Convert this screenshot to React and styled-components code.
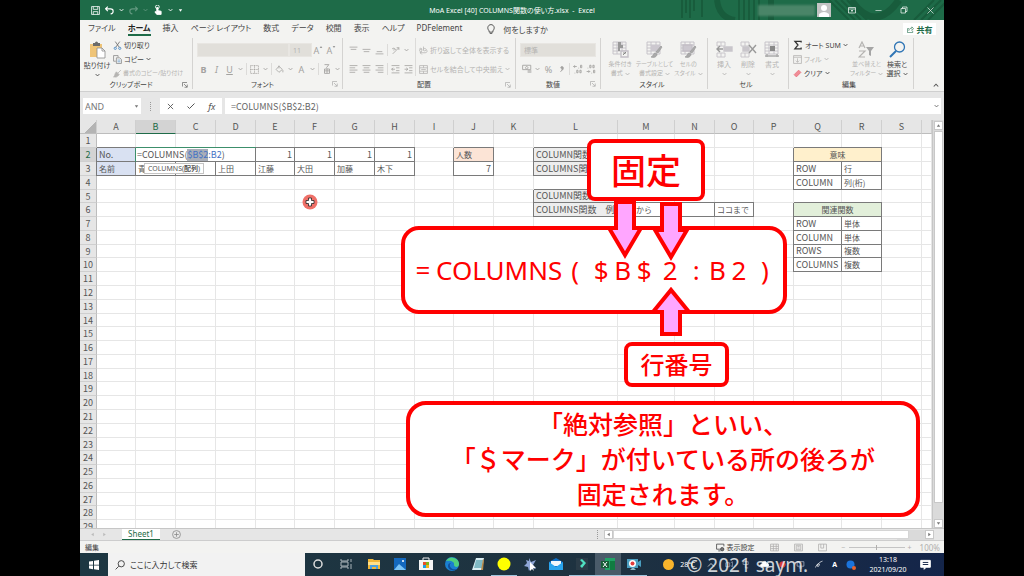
import React from "react";
import styled, { createGlobalStyle, css } from "styled-components";

const GlobalStyle = createGlobalStyle`
  * {
    box-sizing: border-box;
  }
  body {
    margin: 0;
    background: #000;
  }
  button,
  input,
  select {
    font: inherit;
    color: inherit;
    border: 0;
    margin: 0;
    padding: 0;
    background: none;
  }
  svg {
    display: block;
    flex: none;
  }
`;

const Stage = styled.div`
  padding: 0 80px;
  font-family: "Noto Sans", "Noto Sans CJK JP", sans-serif;
`;

const Window = styled.main`
  position: relative;
  display: flex;
  flex-direction: column;
  height: 100vh;
  overflow: hidden;
  background: #e6e6e6;
  color: #444;
  font-size: 7px;
  line-height: 9px;
  font-feature-settings: "palt";
  white-space: nowrap;
`;

/* ---------- title bar ---------- */

const TitleBar = styled.header`
  position: relative;
  display: grid;
  grid-template-columns: 1fr auto 1fr;
  align-items: center;
  flex: none;
  height: 20px;
  background: #1e6b48;
  color: #fff;
`;

const TitlePattern = styled.svg`
  position: absolute;
  right: 0;
  top: 0;
`;

const QuickAccess = styled.div`
  display: flex;
  align-items: center;
  gap: 5px;
  padding-left: 11px;
`;

const WindowControls = styled.div`
  position: relative;
  display: flex;
  align-items: center;
  justify-content: flex-end;
  padding-right: 1px;
`;

const AccountName = styled.div`
  width: 57px;
  height: 11px;
  margin-right: 2px;
  background: #4a8568;
  filter: blur(1px);
`;

const Avatar = styled.div`
  width: 14px;
  height: 14px;
  margin-right: 8px;
  background: #c4c4c4;
`;

const ControlButton = styled.button`
  display: flex;
  align-items: center;
  justify-content: center;
  width: 26px;
  height: 20px;
`;

const IconButton = styled.button`
  display: flex;
  align-items: center;
  opacity: ${(p) => (p.$dim ? 0.3 : 1)};
`;

/* ---------- ribbon ---------- */

const RibbonTabs = styled.nav`
  display: flex;
  align-items: center;
  flex: none;
  gap: 12px;
  height: 18px;
  padding: 0 8px;
  background: #f3f3f1;
  font-size: 8px;
`;

const RibbonTab = styled.button`
  height: 14px;
  line-height: 12px;
  border-bottom: 2px solid transparent;
  ${(p) =>
    p.$active &&
    css`
      color: #222;
      font-weight: 700;
      border-color: #1e6b48;
    `}
`;

const TellMe = styled.button`
  display: flex;
  align-items: center;
  gap: 7px;
  margin-left: 12px;
`;

const ShareButton = styled.button`
  display: flex;
  align-items: center;
  justify-content: center;
  gap: 3px;
  width: 33px;
  height: 12px;
  margin-left: auto;
  background: #fff;
  color: #1e6b48;
  font-weight: 700;
`;

const RibbonBody = styled.section`
  display: flex;
  flex: none;
  height: 54px;
  padding-bottom: 2px;
  background: #f3f3f1;
  border-bottom: 1px solid #cfcfcf;
`;

const Group = styled.section`
  display: flex;
  flex-direction: column;
  width: ${(p) => p.$width}px;
  border-right: 1px solid #d4d3d1;
`;

const GroupBody = styled.div`
  display: flex;
  flex: 1;
  gap: ${(p) => p.$gap || 0}px;
  padding: 0 4px;
`;

const GroupLabel = styled.footer`
  display: flex;
  align-items: center;
  height: 10px;
  padding-right: 4px;
  span {
    flex: 1;
    text-align: center;
  }
`;

const Lines = styled.div`
  display: flex;
  flex-direction: column;
  justify-content: center;
`;

const Rows = styled.div`
  display: flex;
  flex-direction: column;
  gap: 5px;
  padding-top: 5px;
`;

const Row = styled.div`
  display: flex;
  align-items: center;
  height: 14px;
`;

const AlignTools = styled(Rows)`
  width: 69px;
  margin-bottom: 4px;
  border-right: 1px solid #dcdbd9;
`;

const Tool = styled.button`
  display: flex;
  align-items: center;
  justify-content: center;
  width: ${(p) => (p.$caret ? 9 : 13)}px;
  height: 14px;
  color: #a3a2a0;
  font-size: 9px;
  font-weight: ${(p) => (p.$bold ? 700 : 400)};
  font-style: ${(p) => (p.$italic ? "italic" : "normal")};
  text-decoration: ${(p) => (p.$underline ? "underline" : "none")};
`;

const SizeMark = styled.span`
  align-self: flex-start;
  padding-top: 2px;
`;

const Divider = styled.i`
  width: 1px;
  height: 12px;
  margin: 0 1px;
  background: #dcdbd9;
`;

const LineButton = styled.button`
  display: flex;
  align-items: center;
  gap: ${(p) => (p.$small ? 1 : 2)}px;
  height: 14px;
  color: ${(p) => (p.$on ? "#444" : "#b5b4b2")};
  font-size: ${(p) => (p.$small ? 6 : 7)}px;
`;

const BigButton = styled.button`
  display: flex;
  flex-direction: column;
  align-items: center;
  gap: 2px;
  width: ${(p) => p.$width}px;
  padding-top: 3px;
  color: ${(p) => (p.$on ? "#444" : "#b5b4b2")};
  font-size: ${(p) => (p.$small ? 6 : 7)}px;
  span {
    display: flex;
    flex-direction: column;
    align-items: center;
  }
  b {
    display: flex;
    align-items: center;
    gap: 2px;
    height: 9px;
    font-weight: 400;
  }
`;

const Combo = styled.select`
  appearance: none;
  width: ${(p) => p.$width}px;
  height: 14px;
  padding: 0 3px;
  border: 1px solid #e8e6e2;
  background: #e1dfda;
  color: #b5b4b2;
`;

const CollapseButton = styled.button`
  align-self: flex-end;
  margin: 0 5px 1px auto;
`;

/* ---------- formula bar ---------- */

const FormulaBar = styled.section`
  display: flex;
  align-items: center;
  flex: none;
  gap: 3px;
  height: 28px;
  padding: 0 3px;
  font-size: 9px;
`;

const NameBox = styled.label`
  display: flex;
  align-items: center;
  width: 58px;
  height: 16px;
  padding: 0 2px;
  background: #fff;
  color: #777;
  input {
    flex: 1;
    min-width: 0;
  }
`;

const Dots = styled.i`
  width: 1px;
  height: 9px;
  margin: 0 6px 0 6px;
  border-left: 1px dotted #999;
`;

const FormulaActions = styled.div`
  display: flex;
  align-items: center;
  justify-content: space-around;
  width: 62px;
  height: 16px;
  background: #fff;
  color: #555;
`;

const FormulaInput = styled.label`
  display: flex;
  align-items: center;
  flex: 1;
  height: 16px;
  padding: 0 2px 0 6px;
  background: #fff;
  color: #666;
  font-family: "Noto Sans CJK JP", sans-serif;
  input {
    flex: 1;
  }
`;

/* ---------- sheet ---------- */

const SheetArea = styled.section`
  display: flex;
  flex: 1;
  min-height: 0;
`;

const SheetView = styled.div`
  flex: 1;
  min-width: 0;
  overflow: hidden;
  border-right: 1px solid #c6c6c6;
`;

const Grid = styled.table`
  table-layout: fixed;
  width: 100%;
  border-spacing: 0;
  background: #fff;
  font-family: "Noto Sans CJK JP", sans-serif;
  font-size: 9px;
  line-height: 12px;
  font-feature-settings: normal;
  tr {
    height: 14px;
  }
  tbody tr:nth-child(9n + 5),
  tbody tr:nth-child(9n) {
    height: 13px;
  }
`;

const HeadCell = styled.th`
  height: 13px;
  padding: 0;
  background: ${(p) => (p.$selected ? "#d3d3d3" : "#e6e6e6")};
  border-right: 1px solid ${(p) => (p.$row ? "#bdbdbd" : "#cfcfcf")};
  border-bottom: 1px solid
    ${(p) => (p.$row ? "#cfcfcf" : p.$selected ? "#1e6b48" : "#bdbdbd")};
  color: ${(p) => (p.$selected ? "#1e6b48" : "#555")};
  font-weight: 400;
  line-height: 11px;
`;

const Corner = styled(HeadCell)`
  background: linear-gradient(135deg, #e6e6e6 60%, #b4b4b4 60%);
`;

const Cell = styled.td`
  position: ${(p) => (p.$edit ? "relative" : "static")};
  height: 13px;
  padding: 0 2px;
  border-right: 1px solid #e6e6e6;
  border-bottom: 1px solid #e6e6e6;
  background: ${(p) => p.$fill || "transparent"};
  color: #555;
  font-size: ${(p) => (p.$kanji ? 8 : 9)}px;
  text-align: ${(p) => p.$align || "left"};
  ${(p) =>
    p.$boxed &&
    css`
      border-color: #7a7a7a;
      box-shadow: -1px 0 #7a7a7a, 0 -1px #7a7a7a;
    `}
  ${(p) =>
    p.$edit &&
    css`
      padding: 0 1px;
      box-shadow: -1px 0 #3c8f6b, 0 -1px #3c8f6b;
    `}
`;

const RefText = styled.span`
  color: #4472c4;
`;

const PickedRef = styled(RefText)`
  display: inline-block;
  background: #a9aeb8;
`;

const ArgHint = styled.div`
  position: absolute;
  left: 8px;
  top: 15px;
  height: 11px;
  padding: 0 3px;
  border: 1px solid #c4c4c4;
  background: #fff;
  color: #555;
  font-family: "Noto Sans", "Noto Sans CJK JP", sans-serif;
  font-size: 7px;
  line-height: 9px;
`;

const ScrollColumn = styled.div`
  display: flex;
  flex-direction: column;
  width: 11px;
  padding: 1px 1px 0;
  background: #dadada;
`;

const ScrollButton = styled.button`
  display: flex;
  align-items: center;
  justify-content: center;
  width: 9px;
  height: 9px;
  background: #fff;
  border: 1px solid #c8c8c8;
`;

const VerticalThumb = styled.div`
  flex: 1;
  margin: 1px 0 16px;
  background: #fff;
  border: 1px solid #c8c8c8;
`;

const SheetTabs = styled.section`
  display: flex;
  align-items: center;
  flex: none;
  height: 13px;
  padding: 0 10px;
  border-top: 1px solid #c6c6c6;
  border-bottom: 1px solid #cdcdcd;
  font-size: 8px;
`;

const TabArrows = styled.div`
  display: flex;
  gap: 7px;
  width: 32px;
`;

const SheetTab = styled.button`
  align-self: flex-start;
  width: 38px;
  height: 11px;
  margin-right: 12px;
  border-bottom: 1px solid #1e6b48;
  background: #fff;
  color: #1e6b48;
  line-height: 10px;
`;

const HorizontalScroll = styled.div`
  display: flex;
  align-items: center;
  width: 330px;
  height: 10px;
  background: linear-gradient(#dadada, #dadada) right / 37px 100% no-repeat;
`;

const ScrollGrip = styled(Dots)`
  margin: 0 6px 0 auto;
`;

const HorizontalThumb = styled.div`
  flex: 1;
  height: 9px;
  margin-right: 16px;
  background: #fff;
  border: 1px solid #d5d5d5;
`;

const StatusBar = styled.footer`
  display: flex;
  align-items: center;
  flex: none;
  height: 12px;
  padding: 0 4px 0 5px;
  background: #f3f3f1;
`;

const StatusRight = styled.div`
  display: flex;
  align-items: center;
  gap: 15px;
  margin-left: auto;
  color: #b0afad;
`;

const DisplaySettings = styled.button`
  display: flex;
  align-items: center;
  gap: 2px;
  color: #444;
`;

const ZoomControl = styled.label`
  display: flex;
  align-items: center;
  gap: 3px;
  input {
    appearance: none;
    width: 56px;
    height: 1px;
    background: #c4c4c4;
  }
  input::-webkit-slider-thumb {
    appearance: none;
    width: 1px;
    height: 5px;
    background: #b0afad;
  }
  output {
    margin-left: 5px;
    font-size: 8px;
  }
`;

/* ---------- taskbar ---------- */

const Taskbar = styled.footer`
  display: flex;
  flex: none;
  height: 23px;
  background: linear-gradient(90deg, #1d3742, #1e3240 60%, #14254a);
  color: #fff;
`;

const StartButton = styled.button`
  display: flex;
  align-items: center;
  justify-content: center;
  width: 28px;
`;

const SearchBox = styled.label`
  display: flex;
  align-items: center;
  gap: 5px;
  width: 197px;
  padding-left: 7px;
  background: #f2f2f2;
  color: #333;
  font-size: 8px;
  input {
    flex: 1;
    min-width: 0;
  }
  input::placeholder {
    color: #333;
  }
`;

const TaskButton = styled.button`
  display: flex;
  align-items: center;
  justify-content: center;
  width: ${(p) => (p.$wide ? 30 : 26)}px;
  border-bottom: 1px solid ${(p) => (p.$open ? "#9fc4dc" : "transparent")};
  background: ${(p) => (p.$front ? "#4a5b69" : "none")};
`;

const Tray = styled.div`
  display: flex;
  align-items: center;
  gap: 9px;
  margin-left: auto;
  padding-right: 13px;
  font-size: 7px;
`;

const Weather = styled.span`
  display: flex;
  align-items: center;
  gap: 6px;
  padding-right: 3px;
`;

const Clock = styled.time`
  width: 46px;
  text-align: center;
  line-height: 10px;
`;

/* ---------- captions over the sheet ---------- */

const Caption = styled.aside`
  position: absolute;
  left: ${(p) => p.$x}px;
  top: ${(p) => p.$y}px;
  display: flex;
  align-items: center;
  justify-content: center;
  width: ${(p) => p.$w}px;
  height: ${(p) => p.$h}px;
  border: 4px solid #f00;
  border-radius: ${(p) => p.$radius}px;
  background: #fff;
  color: #f00;
  font-feature-settings: normal;
  font-weight: ${(p) => p.$weight || 500};
  font-size: ${(p) => p.$size}px;
  line-height: 35px;
  text-align: center;
`;

const Wide = styled.span`
  width: 1em;
  text-align: center;
`;

const Arrow = styled.svg`
  position: absolute;
  left: ${(p) => p.$x}px;
  top: ${(p) => p.$y}px;
  fill: #ffa6ff;
  stroke: #f00;
  stroke-width: 4;
`;

const Pointer = styled.svg`
  position: absolute;
  left: 222px;
  top: 194px;
`;

const Watermark = styled.div`
  position: absolute;
  right: 136px;
  bottom: 0;
  color: rgba(255, 255, 255, 0.8);
  font-size: 19px;
  line-height: 21px;
`;

/* ---------- drawings ---------- */

const Icon = ({ size = 10, w, h, box = "0 0 16 16", color = "currentColor", children }) => (
  <svg
    width={w || size}
    height={h || size}
    viewBox={box}
    fill="none"
    stroke={color}
    strokeWidth="1.4"
    aria-hidden="true"
  >
    {children}
  </svg>
);

const Caret = ({ color }) => (
  <Icon w={5} h={4} box="0 0 8 6" color={color}>
    <path d="M1 1.5l3 3 3-3" />
  </Icon>
);

const Triangle = ({ turn = 0, size = 5, color = "#777" }) => (
  <svg width={size} height={size} viewBox="0 0 6 6" aria-hidden="true">
    <path d="M1 1.5h4L3 4.5z" fill={color} transform={`rotate(${turn} 3 3)`} />
  </svg>
);

const Launcher = ({ on }) => (
  <Icon size={6} color={on ? "#666" : "#aaa"} box="0 0 12 12">
    <path d="M1 9V1h9M4 4l6 6M10.500 5v5.500H5" />
  </Icon>
);

const AlignIcon = ({ lines }) => (
  <Icon size={9}>
    {lines.map(([y, a, b]) => (
      <path key={y} d={`M${a} ${y}H${b}`} />
    ))}
  </Icon>
);

const topLines = [[2, 1, 15], [6, 3, 13]];
const middleLines = [[6, 1, 15], [10, 3, 13]];
const bottomLines = [[10, 3, 13], [14, 1, 15]];
const leftLines = [[1, 1, 15], [5, 1, 11], [9, 1, 15], [13, 1, 11]];
const centerLines = [[1, 1, 15], [5, 3, 13], [9, 1, 15], [13, 3, 13]];
const rightLines = [[1, 1, 15], [5, 5, 15], [9, 1, 15], [13, 5, 15]];

const PasteIcon = () => (
  <svg width="17" height="18" viewBox="0 0 17 18" aria-hidden="true">
    <path d="M1 3h12v13H1z" fill="#efc477" />
    <path d="M4 2h2a1.500 1.500 0 0 1 3 0h2v3H4z" fill="#6b6b6b" />
    <path d="M8 7h5l3 3v7H8z" fill="#fff" stroke="#8a8a8a" strokeWidth="0.800" />
    <path d="M13 7v3h3" fill="none" stroke="#8a8a8a" strokeWidth="0.800" />
  </svg>
);

const CutIcon = () => (
  <Icon size={9} color="#666">
    <path d="M4 1l7 10M12 1L5 11" />
    <circle cx="4" cy="13" r="2" stroke="#3a7fc1" />
    <circle cx="12" cy="13" r="2" stroke="#3a7fc1" />
  </Icon>
);

const CopyIcon = () => (
  <Icon size={9} color="#888">
    <path d="M9 4V1H1v10h4M6 5h6l3 3v7H6z" />
    <path d="M8 9h5M8 12h5" stroke="#3a7fc1" strokeWidth="1" />
  </Icon>
);

const BrushIcon = () => (
  <Icon size={9}>
    <path d="M14 2L9 7M6 5l5 5-3 3c-2 2-5 1-7 1 2-1 2-4 3-6z" fill="currentColor" />
  </Icon>
);

const TableIcon = ({ children }) => (
  <Icon size={17} box="0 0 17 17" color="#c3bfc6">
    <path d="M1 1h13v12H1zM1 4h13M1 7h13M1 10h13M5 1v12M10 1v12" strokeWidth="0.900" />
    {children}
  </Icon>
);

const CellsIcon = ({ children }) => (
  <Icon size={17} box="0 0 17 17" color="#c9c6cb">
    <path d="M1 1h8v4H1zM5 1v4M1 12h8v4H1zM5 12v4" strokeWidth="1" />
    {children}
  </Icon>
);

const StyleBrush = () => (
  <path d="M16 6l-4 6-2-1 5-6zM9 12c-2 0-1 3-4 4 3 1 6 0 6-3z" fill="#aaa" stroke="#999" strokeWidth="0.700" />
);

const PatternLines = () => (
  <TitlePattern width="265" height="20" fill="none" stroke="#185c3c" aria-hidden="true">
    <path
      d="M3 0v18M7 0v13M11 0v18M15 0v11M23 0v17M60 0v20M65 0v20M70 0v20M75 0v20M80 0v20"
      strokeWidth="2"
    />
    <path d="M38 0q2 18 18 20M92 0v20" strokeWidth="6" />
    <path
      d="M150 0l20 20M156 0l20 20M162 0l20 20M168 0l20 20M235 20l20-20M242 20l20-20M249 20l20-20"
      strokeWidth="2"
    />
    <path d="M172 0q24 34 48 0" strokeWidth="7" />
  </TitlePattern>
);

/* ---------- sheet data ---------- */

const columns = [
  ["A", 39], ["B", 40], ["C", 40], ["D", 40], ["E", 39], ["F", 40], ["G", 40],
  ["H", 40], ["I", 39], ["J", 40], ["K", 40], ["L", 84], ["M", 57], ["N", 40],
  ["O", 39], ["P", 40], ["Q", 48], ["R", 40], ["S", 40], ["", null],
];

const blue = "#d9e1f2";
const grey = "#ededed";

const cells = {
  A2: { text: "No.", fill: blue },
  B2: { edit: true, span: 3 },
  E2: { text: "1", align: "right" },
  F2: { text: "1", align: "right" },
  G2: { text: "1", align: "right" },
  H2: { text: "1", align: "right" },
  A3: { text: "名前", fill: blue },
  B3: { text: "青" },
  C3: { text: "" },
  D3: { text: "上田" },
  E3: { text: "江藤" },
  F3: { text: "大田" },
  G3: { text: "加藤" },
  H3: { text: "木下" },
  J2: { text: "人数", fill: "#fce4d6" },
  J3: { text: "7", align: "right" },
  L2: { text: "COLUMN関数", fill: grey },
  L3: { text: "COLUMNS関数", fill: grey },
  L5: { text: "COLUMN関数", fill: grey },
  L6: { text: "COLUMNS関数　例", fill: grey },
  M6: { text: "ココから" },
  N6: { text: "" },
  O6: { text: "ココまで" },
  Q2: { text: "意味", fill: "#fff0cc", align: "center", span: 2 },
  Q3: { text: "ROW" },
  R3: { text: "行" },
  Q4: { text: "COLUMN" },
  R4: { text: "列(桁)" },
  Q6: { text: "関連関数", fill: "#e2efda", align: "center", span: 2 },
  Q7: { text: "ROW" },
  R7: { text: "単体" },
  Q8: { text: "COLUMN" },
  R8: { text: "単体" },
  Q9: { text: "ROWS" },
  R9: { text: "複数" },
  Q10: { text: "COLUMNS" },
  R10: { text: "複数" },
};

const SheetRow = ({ number }) => {
  const items = [];
  for (let i = 0; i < columns.length; i++) {
    const cell = cells[columns[i][0] + number];
    if (!cell) {
      items.push(<Cell key={i} />);
    } else if (cell.edit) {
      items.push(
        <Cell key={i} colSpan={cell.span} $boxed $edit>
          =COLUMNS(<PickedRef>$B$2</PickedRef>
          <RefText>:B2</RefText>)
          <ArgHint>
            COLUMNS(<b>配列</b>)
          </ArgHint>
        </Cell>
      );
    } else {
      items.push(
        <Cell
          key={i}
          colSpan={cell.span}
          $boxed
          $fill={cell.fill}
          $align={cell.align}
          $kanji={!/[A-Z0-9]/.test(cell.text)}
        >
          {cell.text}
        </Cell>
      );
    }
    if (cell && cell.span) i += cell.span - 1;
  }
  return (
    <tr>
      <HeadCell $row $selected={number === 2}>
        {number}
      </HeadCell>
      {items}
    </tr>
  );
};

const Sheet = () => (
  <SheetArea>
    <SheetView>
      <Grid>
        <colgroup>
          <col width="17" />
          {columns.map(([name, width]) => (
            <col key={name} width={width || undefined} />
          ))}
        </colgroup>
        <thead>
          <tr>
            <Corner />
            {columns.map(([name]) => (
              <HeadCell key={name} $selected={name === "B"}>
                {name}
              </HeadCell>
            ))}
          </tr>
        </thead>
        <tbody>
          {Array.from({ length: 29 }, (_, i) => (
            <SheetRow key={i} number={i + 1} />
          ))}
        </tbody>
      </Grid>
    </SheetView>
    <ScrollColumn>
      <ScrollButton aria-label="上へ">
        <Triangle turn={180} />
      </ScrollButton>
      <VerticalThumb />
      <ScrollButton aria-label="下へ">
        <Triangle />
      </ScrollButton>
    </ScrollColumn>
  </SheetArea>
);

/* ---------- ribbon groups ---------- */

const tabs = [
  "ファイル", "ホーム", "挿入", "ページ レイアウト", "数式",
  "データ", "校閲", "表示", "ヘルプ", "PDFelement",
];

const RibbonGroup = ({ label, width, gap, launcher, on, children }) => (
  <Group $width={width}>
    <GroupBody $gap={gap}>{children}</GroupBody>
    <GroupLabel>
      <span>{label}</span>
      {launcher && <Launcher on={on} />}
    </GroupLabel>
  </Group>
);

const CaretTool = () => (
  <Tool $caret aria-label="その他">
    <Caret />
  </Tool>
);

const Big = ({ icon, lines, width, on, small, caret }) => (
  <BigButton $width={width} $on={on} $small={small}>
    {icon}
    <span>
      {lines.map((line, i) => (
        <b key={line}>
          {line}
          {caret === "inline" && i === lines.length - 1 && <Caret />}
        </b>
      ))}
      {caret === "below" && (
        <b>
          <Caret />
        </b>
      )}
    </span>
  </BigButton>
);

const Ribbon = () => (
  <RibbonBody>
    <RibbonGroup label="クリップボード" width={113} gap={3} launcher on>
      <Big icon={<PasteIcon />} lines={["貼り付け"]} width={26} on caret="below" />
      <Lines>
        <LineButton $on><CutIcon />切り取り</LineButton>
        <LineButton $on><CopyIcon />コピー <Caret /></LineButton>
        <LineButton $small><BrushIcon />書式のコピー/貼り付け</LineButton>
      </Lines>
    </RibbonGroup>

    <RibbonGroup label="フォント" width={150} launcher>
      <Rows>
        <Row>
          <Combo $width={92} aria-label="フォント名" />
          <Combo $width={23} aria-label="サイズ" defaultValue="11">
            <option>11</option>
          </Combo>
          <Tool>A<SizeMark><Triangle turn={180} size={4} color="#999" /></SizeMark></Tool>
          <Tool>A<SizeMark><Triangle size={4} color="#999" /></SizeMark></Tool>
        </Row>
        <Row>
          <Tool $bold>B</Tool>
          <Tool $italic>I</Tool>
          <Tool $underline>U</Tool>
          <CaretTool />
          <Divider />
          <Tool aria-label="罫線">
            <Icon size={9}><path d="M1 1h14v14H1zM8 1v14M1 8h14" strokeDasharray="2 1" /></Icon>
          </Tool>
          <CaretTool />
          <Divider />
          <Tool aria-label="塗りつぶし">
            <Icon size={9}><path d="M7 2l6 6-6 5-5-5zM7 1v5M14 9v4" /></Icon>
          </Tool>
          <CaretTool />
          <Tool>A</Tool>
          <CaretTool />
          <Divider />
          <Tool aria-label="ふりがな">
            <Icon size={10}><path d="M4 1h7L7 6M4 8h8M8 7v8M4 11h8M4 15h8M4 8v7M12 8v7" /></Icon>
          </Tool>
          <CaretTool />
        </Row>
      </Rows>
    </RibbonGroup>

    <RibbonGroup label="配置" width={173} gap={3} launcher>
      <AlignTools>
        <Row>
          <Tool aria-label="上揃え"><AlignIcon lines={topLines} /></Tool>
          <Tool aria-label="上下中央揃え"><AlignIcon lines={middleLines} /></Tool>
          <Tool aria-label="下揃え"><AlignIcon lines={bottomLines} /></Tool>
          <Divider />
          <Tool aria-label="方向">
            <Icon size={9}><path d="M3 14L14 3M10 3h4v4M2 5a2 2 0 1 1 3 3M5 3l4 4" /></Icon>
          </Tool>
          <CaretTool />
        </Row>
        <Row>
          <Tool aria-label="左揃え"><AlignIcon lines={leftLines} /></Tool>
          <Tool aria-label="中央揃え"><AlignIcon lines={centerLines} /></Tool>
          <Tool aria-label="右揃え"><AlignIcon lines={rightLines} /></Tool>
          <Divider />
          <Tool aria-label="インデントを減らす">
            <Icon size={9}><path d="M1 1h14M9 5h6M9 10h6M1 14h14M7 7.500H1M4 5L1 7.500 4 10" /></Icon>
          </Tool>
          <Tool aria-label="インデントを増やす">
            <Icon size={9}><path d="M1 1h14M9 5h6M9 10h6M1 14h14M1 7.500h6M4 5l3 2.500L4 10" /></Icon>
          </Tool>
        </Row>
      </AlignTools>
      <Rows>
        <LineButton>
          <Icon size={9}><path d="M1 6a2 2 0 1 1 4 0v2a2 2 0 1 1-2-2h2M8 1v7a3 2 0 1 0 0-3M2 12h9c4 0 4-4 2-5M5 10l-3 2 3 3" /></Icon>
          折り返して全体を表示する
        </LineButton>
        <LineButton>
          <Icon size={9}><path d="M1 1h14v14H1zM1 5h14M1 11h14M8 1v4M8 11v4M4 8h8" /></Icon>
          セルを結合して中央揃え <Caret />
        </LineButton>
      </Rows>
    </RibbonGroup>

    <RibbonGroup label="数値" width={85} launcher>
      <Rows>
        <Row>
          <Combo $width={76} aria-label="表示形式" defaultValue="標準">
            <option>標準</option>
          </Combo>
        </Row>
        <Row>
          <Tool aria-label="通貨">
            <Icon size={10}><path d="M1 2h13v7H1zM7.500 4a2 2 0 1 0 .1 0M9 11h6M9 13h6" /></Icon>
          </Tool>
          <CaretTool />
          <Tool>%</Tool>
          <Tool aria-label="桁区切り">
            <Icon size={8}><path d="M9 10c2-1 3-7-1-7-4 0-3 5 0 4 0 3-1 5-3 6z" fill="currentColor" /></Icon>
          </Tool>
          <Divider />
          <Tool aria-label="小数点以下を増やす">
            <Icon size={10}><path d="M6 4H1M3 2L1 4l2 2M9 6v1M12 2h2v4h-2zM3 14v1M6 10h2v4H6zM11 10h2v4h-2z" /></Icon>
          </Tool>
          <Tool aria-label="小数点以下を減らす">
            <Icon size={10}><path d="M1 12h5M4 10l2 2-2 2M9 14v1M12 10h2v4h-2zM3 6v1M6 2h2v4H6zM11 2h2v4h-2z" /></Icon>
          </Tool>
        </Row>
      </Rows>
    </RibbonGroup>

    <RibbonGroup label="スタイル" width={107}>
      <Big
        width={31}
        small
        caret="inline"
        lines={["条件付き", "書式"]}
        icon={
          <TableIcon>
            <path d="M6 1h3v3H6zM6 4h5v3H6zM6 7h2v3H6z" fill="#999" stroke="none" />
            <path d="M9 10h7v6H9z" fill="#f3f3f1" />
            <path d="M11 14l3-3M11 12h3" stroke="#777" strokeWidth="0.800" />
          </TableIcon>
        }
      />
      <Big
        width={39}
        small
        caret="inline"
        lines={["テーブルとして", "書式設定"]}
        icon={
          <TableIcon>
            <path d="M5 4h9v6H5z" fill="#ccc8cf" stroke="none" />
            <StyleBrush />
          </TableIcon>
        }
      />
      <Big
        width={30}
        small
        caret="inline"
        lines={["セルの", "スタイル"]}
        icon={
          <TableIcon>
            <path d="M3 4h9v6H3z" fill="#ccc8cf" />
            <StyleBrush />
          </TableIcon>
        }
      />
    </RibbonGroup>

    <RibbonGroup label="セル" width={81}>
      <Big
        width={24}
        caret="below"
        lines={["挿入"]}
        icon={
          <CellsIcon>
            <path d="M8 6h8v4H8z" fill="#c9c6cb" />
            <path d="M7 8H1M4 5L1 8l3 3" stroke="#999" />
          </CellsIcon>
        }
      />
      <Big
        width={24}
        caret="below"
        lines={["削除"]}
        icon={
          <CellsIcon>
            <path d="M3 6h6v4H3z" fill="#c9c6cb" />
            <path d="M9 4l7 8M16 4l-7 8" stroke="#999" />
          </CellsIcon>
        }
      />
      <Big
        width={24}
        caret="below"
        lines={["書式"]}
        icon={
          <TableIcon>
            <path d="M6 5h5v5H6z" fill="#888" stroke="none" />
            <path d="M1 15h14M3 13v3M13 13v3" stroke="#aaa" />
          </TableIcon>
        }
      />
    </RibbonGroup>

    <RibbonGroup label="編集" width={125} gap={2}>
      <Lines>
        <LineButton $on>
          <Icon size={10} color="#333"><path d="M13 4V2H3l5 6-5 6h10v-2" strokeWidth="2" /></Icon>
          オート SUM <Caret />
        </LineButton>
        <LineButton>
          <Icon size={9}><path d="M1 1h14v14H1zM1 4h14M8 6v7M5 10l3 3 3-3" /></Icon>
          フィル <Caret />
        </LineButton>
        <LineButton $on>
          <Icon size={9} color="#e8707c"><path d="M10 2l4 4-8 8-4-4z" fill="#f08c96" /></Icon>
          クリア <Caret />
        </LineButton>
      </Lines>
      <Big
        width={34}
        small
        caret="inline"
        lines={["並べ替えと", "フィルター"]}
        icon={
          <Icon size={17} box="0 0 17 17" color="#b5b4b2">
            <path d="M1 7l3-6 3 6M2 5h4M1 10h6l-6 6h6" strokeWidth="1.200" />
            <path d="M8 6h8l-3 4v5l-2-1v-4z" fill="#a5a5a5" stroke="none" />
          </Icon>
        }
      />
      <Big
        width={26}
        on
        caret="inline"
        lines={["検索と", "選択"]}
        icon={
          <Icon size={17} box="0 0 17 17" color="#2f75b5">
            <circle cx="10.500" cy="6" r="5" strokeWidth="1.300" />
            <path d="M7 10l-6 6" strokeWidth="2" />
          </Icon>
        }
      />
    </RibbonGroup>
    <CollapseButton aria-label="リボンを折りたたむ">
      <Icon size={6} color="#555" box="0 0 8 8"><path d="M1 6l3-3 3 3" /></Icon>
    </CollapseButton>
  </RibbonBody>
);

/* ---------- taskbar icons ---------- */

const TaskIcon = ({ children }) => (
  <svg width="16" height="16" viewBox="0 0 16 16" aria-hidden="true">
    {children}
  </svg>
);

const apps = [
  {
    name: "Cortana",
    icon: <circle cx="8" cy="8" r="4" fill="none" stroke="#ddd" strokeWidth="1.500" />,
  },
  {
    name: "タスク ビュー",
    wide: true,
    icon: <path d="M3 3v2h7V3M3 13v-2h7v2M3 6h7v4H3zM13 3v3M13 8v5" fill="none" stroke="#aab4ba" />,
  },
  {
    name: "エクスプローラー",
    icon: (
      <>
        <path d="M2 3h5l1 1h6v9H2z" fill="#f2b738" />
        <path d="M2 6h12v3H2z" fill="#ffe08a" />
        <path d="M4 9h8v4h-2v-2H6v2H4z" fill="#4aa0e0" />
      </>
    ),
  },
  {
    name: "フォト",
    icon: (
      <>
        <path d="M2 2h12v12H2z" fill="#1468bd" />
        <path d="M2 14l5-6 7 6z" fill="#7cc4f5" />
        <circle cx="11" cy="5" r="1" fill="#fff" />
      </>
    ),
  },
  {
    name: "Microsoft Store",
    icon: (
      <>
        <path d="M5 5V2h6v3" fill="none" stroke="#eee" />
        <path d="M1 4h14v10H1z" fill="#f4f4f4" />
        <path d="M5 6h3v3H5z" fill="#e8502a" />
        <path d="M8 6h3v3H8z" fill="#7fb51c" />
        <path d="M5 9h3v3H5z" fill="#1c9ee4" />
        <path d="M8 9h3v3H8z" fill="#f5b51a" />
      </>
    ),
  },
  {
    name: "Edge",
    icon: (
      <>
        <circle cx="8" cy="8" r="7" fill="#1b7fcf" />
        <path d="M2 5a7 7 0 0 1 13 4c-1 3-5 2-5 0 1-3-3-5-8-4z" fill="#4fcf7f" />
        <path d="M6 8c-1 4 3 6 7 5-3 3-9 1-9-3 0-2 1-3 3-3z" fill="#0f4f9c" />
      </>
    ),
  },
  {
    name: "メモ帳",
    icon: (
      <>
        <path d="M6 2h8l-2 12H2z" fill="#d9edf2" />
        <path d="M6 4h7l-1 8H4z" fill="#7fb9c4" />
        <path d="M13 3l1 1-1 10h-2z" fill="#b88a4a" />
      </>
    ),
  },
  { name: "マーカー", open: true, icon: <circle cx="8" cy="8" r="6.500" fill="#ff0" /> },
  {
    name: "ツール",
    icon: (
      <>
        <path d="M7 2l2 4 5-2-3 5 3 4-5-1-2 3-1-4-4-1 3-3-1-3 3 1z" fill="#8fa6d6" />
        <path d="M8 6l6 6-3 0 1 3-2-2-2 2z" fill="#fff" />
      </>
    ),
  },
  {
    name: "メール",
    icon: (
      <>
        <path d="M1 6l7-4 7 4v8H1z" fill="#0f6fc5" />
        <path d="M3 5h10v5H3z" fill="#f2f8fc" />
        <path d="M1 6l7 5 7-5v8H1z" fill="#2aa5ee" />
      </>
    ),
  },
  {
    name: "Filmora",
    open: true,
    icon: (
      <>
        <path d="M2 2h12v12H2z" fill="#2a3b47" />
        <path d="M6 4l2-1 4 4-4 5-2-2 3-3z" fill="#4fe0c0" />
      </>
    ),
  },
  {
    name: "Excel",
    open: true,
    front: true,
    icon: (
      <>
        <path d="M5 2h10v12H5z" fill="#21a366" />
        <path d="M10 5h5v9h-5z" fill="#107c41" />
        <path d="M1 5h8v7H1z" fill="#185c37" />
        <path d="M3 6l4 5M7 6l-4 5" stroke="#fff" />
      </>
    ),
  },
  {
    name: "録画",
    open: true,
    icon: (
      <>
        <path d="M1 3h11v9H1zM12 6l3-2v7l-3-2z" fill="#4a9ec0" />
        <path d="M4 14l2-2h2l2 2z" fill="#8fb8c8" />
        <circle cx="6.500" cy="7.500" r="3.500" fill="#fff" />
        <circle cx="6.500" cy="7.500" r="2" fill="#e23b3b" />
      </>
    ),
  },
];

const downArrow = "M10 2H28V28H35L19 55 3 28H10Z";
const upArrow = "M11 51H29V29H38L20 7 2 29H11Z";

export default function App() {
  return (
    <Stage>
      <GlobalStyle />
      <Window>
        <TitleBar>
          <PatternLines />
          <QuickAccess>
            <IconButton aria-label="上書き保存">
              <Icon size={9} color="#fff"><path d="M1 1h14v14H1zM4 1v5h8V1M4 15v-5h8v5" /></Icon>
            </IconButton>
            <IconButton aria-label="元に戻す">
              <Icon size={9} color="#fff"><path d="M5 1L1 5l4 4M1 5h9c6 0 6 8 0 9" strokeWidth="2" /></Icon>
            </IconButton>
            <Caret />
            <IconButton $dim aria-label="やり直し">
              <Icon size={9} color="#fff"><path d="M11 1l4 4-4 4M15 5H6c-6 0-6 8 0 9" strokeWidth="2" /></Icon>
            </IconButton>
            <IconButton $dim aria-label="やり直しの一覧"><Caret /></IconButton>
            <IconButton aria-label="タッチ/マウス モード">
              <Icon size={10} color="#fff"><path d="M6 10V4h2v5l5 1v5H6l-3-4z" fill="#fff" /><circle cx="7" cy="3" r="3" /></Icon>
            </IconButton>
            <Caret />
            <Triangle color="#fff" />
          </QuickAccess>
          <span>MoA Excel [40] COLUMNS関数の使い方.xlsx&nbsp; -&nbsp; Excel</span>
          <WindowControls>
            <AccountName />
            <Avatar>
              <svg width="14" height="14" fill="#fff" aria-hidden="true">
                <circle cx="7" cy="5" r="3" />
                <path d="M2 14V11q5-4 10 0v3z" />
              </svg>
            </Avatar>
            <ControlButton aria-label="リボンの表示オプション">
              <Icon size={8}><path d="M1 3h14v11H1zM1 6h14M8 12V8M6 10l2-2 2 2" /></Icon>
            </ControlButton>
            <ControlButton aria-label="最小化"><Icon size={7}><path d="M1 8h14" /></Icon></ControlButton>
            <ControlButton aria-label="元のサイズ">
              <Icon size={8}><path d="M2 5h9v9H2zM5 5V2h9v9h-3" /></Icon>
            </ControlButton>
            <ControlButton aria-label="閉じる"><Icon size={7}><path d="M1 1l14 14M15 1L1 15" /></Icon></ControlButton>
          </WindowControls>
        </TitleBar>

        <RibbonTabs>
          {tabs.map((tab) => (
            <RibbonTab key={tab} $active={tab === "ホーム"}>
              {tab}
            </RibbonTab>
          ))}
          <TellMe>
            <Icon size={10}><path d="M5 11C1 7 3 1 8 1s7 6 3 10v2H5zM6 15h4" /></Icon>
            何をしますか
          </TellMe>
          <ShareButton>
            <Icon size={7}><path d="M5 6H1v9h12v-4M4 11c1-5 4-6 7-6V2l4 4-4 4V8" /></Icon>
            共有
          </ShareButton>
        </RibbonTabs>
        <Ribbon />

        <FormulaBar>
          <NameBox>
            <input aria-label="名前ボックス" defaultValue="AND" />
            <Triangle />
          </NameBox>
          <Dots />
          <FormulaActions>
            <button aria-label="キャンセル"><Icon size={7}><path d="M2 2l12 12M14 2L2 14" strokeWidth="2" /></Icon></button>
            <button aria-label="入力"><Icon size={8}><path d="M1 9l4 4L15 3" strokeWidth="2" /></Icon></button>
            <button><i>fx</i></button>
          </FormulaActions>
          <FormulaInput>
            <input aria-label="数式バー" defaultValue="=COLUMNS($B$2:B2)" />
            <Caret />
          </FormulaInput>
        </FormulaBar>

        <Sheet />

        <SheetTabs>
          <TabArrows>
            <Triangle turn={90} color="#bbb" />
            <Triangle turn={-90} color="#bbb" />
          </TabArrows>
          <SheetTab>Sheet1</SheetTab>
          <IconButton aria-label="新しいシート">
            <Icon size={9} color="#888"><circle cx="8" cy="8" r="7" /><path d="M8 4v8M4 8h8" /></Icon>
          </IconButton>
          <ScrollGrip />
          <HorizontalScroll>
            <ScrollButton aria-label="左へ"><Triangle turn={90} /></ScrollButton>
            <HorizontalThumb />
            <ScrollButton aria-label="右へ"><Triangle turn={-90} /></ScrollButton>
          </HorizontalScroll>
        </SheetTabs>

        <StatusBar>
          編集
          <StatusRight>
            <DisplaySettings>
              <Icon size={9}><path d="M14 6V2H1v9h6M4 14h4" /><circle cx="11" cy="11" r="3" fill="#777" /></Icon>
              表示設定
            </DisplaySettings>
            <Icon size={9}><path d="M1 2h14v12H1zM1 6h14M1 10h14M6 2v12M11 2v12" /></Icon>
            <Icon size={9}><path d="M1 2h14v12H1zM4 4h8v8H4zM6 6h4M6 9h4" /></Icon>
            <Icon size={9}><path d="M1 2h14v12H1zM5 2v7h5V2" /></Icon>
            <ZoomControl>
              −
              <input type="range" aria-label="ズーム" defaultValue="50" />
              +
              <output>100%</output>
            </ZoomControl>
          </StatusRight>
        </StatusBar>

        <Taskbar>
          <StartButton aria-label="スタート">
            <svg width="10" height="10" fill="#fff" aria-hidden="true">
              <path d="M0 1.500l4-.5v3.700H0zM5 .8L10 0v4.700H5zM0 5.500h4v3.700L0 8.600zM5 5.500h5V10l-5-.7z" />
            </svg>
          </StartButton>
          <SearchBox>
            <Icon size={10} color="#333"><circle cx="10" cy="6" r="5" /><path d="M6 10l-5 5" /></Icon>
            <input aria-label="検索" placeholder="ここに入力して検索" />
          </SearchBox>
          {apps.map((app) => (
            <TaskButton
              key={app.name}
              aria-label={app.name}
              $wide={app.wide}
              $open={app.open}
              $front={app.front}
            >
              <TaskIcon>{app.icon}</TaskIcon>
            </TaskButton>
          ))}
          <Tray>
            <Weather>
              <svg width="11" height="11" aria-hidden="true"><circle cx="5.500" cy="5.500" r="5.500" fill="#f9b52c" /></svg>
              28℃
            </Weather>
            <Icon size={8}><path d="M2 11l6-6 6 6" /></Icon>
            <Icon size={9} color="#8f9bb0"><path d="M3 5h7v7H3zM12 5l3-2v9l-3-2" /></Icon>
            <Icon size={9} color="#8f9bb0"><path d="M2 3h9v5H2zM6 8v6h5" /></Icon>
            <Icon size={9} color="#fff"><path d="M3 12h10a3 3 0 0 0-1-6 4 4 0 0 0-8 1 2 2 0 0 0-1 5z" fill="#fff" /></Icon>
            <Icon size={9} color="#d43c3c"><circle cx="8" cy="8" r="5" fill="#d43c3c" /></Icon>
            <Icon size={9} color="#a7b0c0"><path d="M2 3h12v8H2zM5 14h6" /></Icon>
            <Icon size={9}><path d="M2 13c4-2 2-6 6-6s0 6-2 4 5-8 9-9" /></Icon>
            <b>A</b>
            <svg width="10" height="10" aria-hidden="true">
              <circle cx="4.500" cy="4.500" r="4" fill="#1b74dc" />
              <circle cx="8" cy="8" r="2" fill="#e8622c" />
            </svg>
            <Clock>
              13:18
              <br />
              2021/09/20
            </Clock>
            <Icon size={11}><path d="M1 2h14v10H9l-3 3v-3H1z" fill="#fff" /><path d="M4 5h8M4 8h8" stroke="#14254a" /></Icon>
          </Tray>
        </Taskbar>

        <Pointer width="16" height="16" aria-hidden="true">
          <circle cx="8" cy="8" r="7.500" fill="#ef7068" />
          <path d="M6.500 4h3v2.500H12v3H9.500V12h-3V9.500H4v-3h2.500z" fill="#fff" stroke="#222" strokeWidth="0.800" />
        </Pointer>

        <Caption $x={321} $y={226} $w={386} $h={88} $radius={18} $size={26} $weight={400}>
          <Wide>=</Wide>
          COLUMNS
          <Wide>(</Wide>
          <Wide>$</Wide>B<Wide>$</Wide>
          <Wide>2</Wide>
          <Wide>:</Wide>B<Wide>2</Wide>
          <Wide>)</Wide>
        </Caption>
        <Caption $x={507} $y={139} $w={118} $h={62} $radius={8} $size={35}>
          固定
        </Caption>
        <Arrow $x={526} $y={200} width="38" height="60"><path d={downArrow} /></Arrow>
        <Arrow $x={572} $y={202} width="38" height="60"><path d={downArrow} /></Arrow>
        <Arrow $x={571} $y={283} width="40" height="55"><path d={upArrow} /></Arrow>
        <Caption $x={544} $y={342} $w={105} $h={45} $radius={8} $size={24}>
          行番号
        </Caption>
        <Caption $x={326} $y={401} $w={514} $h={116} $radius={20} $size={25}>
          「絶対参照」といい、
          <br />
          「＄マーク」が付いている所の後ろが
          <br />
          固定されます。
        </Caption>
        <Watermark>© 2021 saym.</Watermark>
      </Window>
    </Stage>
  );
}
